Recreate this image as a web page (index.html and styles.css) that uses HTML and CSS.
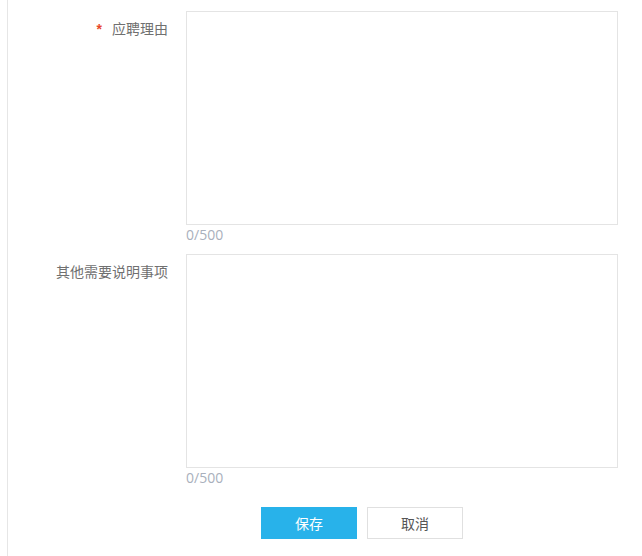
FILE: index.html
```html
<!DOCTYPE html>
<html lang="zh-CN">
<head>
    <meta charset="UTF-8">
    <meta name="viewport" content="width=device-width, initial-scale=1.0">
    <title>应聘信息</title>
    <link rel="stylesheet" href="styles.css">
</head>
<body>
    <div class="page">
        <form class="apply-form">
            <div class="form-row">
                <label class="form-label"><span class="required">*</span>应聘理由</label>
                <div class="form-field">
                    <textarea class="form-textarea" maxlength="500"></textarea>
                    <div class="counter">0/500</div>
                </div>
            </div>
            <div class="form-row">
                <label class="form-label">其他需要说明事项</label>
                <div class="form-field">
                    <textarea class="form-textarea" maxlength="500"></textarea>
                    <div class="counter">0/500</div>
                </div>
            </div>
            <div class="form-actions">
                <button type="button" class="btn btn-primary">保存</button>
                <button type="button" class="btn btn-default">取消</button>
            </div>
        </form>
    </div>
</body>
</html>
```

FILE: styles.css
```css
    body {
        font-family: "Noto Sans CJK SC", "Liberation Sans", sans-serif;
        margin: 0;
        background-color: #fff;
    }
    .page {
        margin-left: 7px;
        border-left: 1px solid #e6e6e6;
        min-height: 556px;
        padding-top: 11px;
        box-sizing: border-box;
    }
    .form-row {
        display: flex;
        align-items: flex-start;
    }
    .form-label {
        width: 160px;
        padding-right: 18px;
        padding-top: 7px;
        text-align: right;
        font-size: 14px;
        line-height: 20px;
        color: #707070;
    }
    .required {
        color: #e8472b;
        font-weight: bold;
        font-family: "Liberation Sans", sans-serif;
        margin-right: 10px;
    }
    .form-field {
        width: 432px;
    }
    .form-textarea {
        display: block;
        width: 432px;
        height: 214px;
        box-sizing: border-box;
        border: 1px solid #e4e4e4;
        resize: none;
        outline: none;
        padding: 6px 8px;
        font-family: inherit;
        font-size: 14px;
        color: #333;
    }
    .counter {
        font-size: 14px;
        line-height: 20px;
        color: #a9b0bc;
        margin-bottom: 9px;
        font-family: "Open Sans", "Liberation Sans", sans-serif;
    }
    .form-actions {
        display: flex;
        gap: 10px;
        margin-top: 10px;
        padding-left: 253px;
    }
    .btn {
        width: 96px;
        height: 32px;
        font-family: inherit;
        font-size: 14px;
        cursor: pointer;
        box-sizing: border-box;
    }
    .btn-primary {
        background-color: #28b2ea;
        border: none;
        color: #fff;
    }
    .btn-default {
        background-color: #fff;
        border: 1px solid #e0e0e0;
        color: #555;
    }
```
